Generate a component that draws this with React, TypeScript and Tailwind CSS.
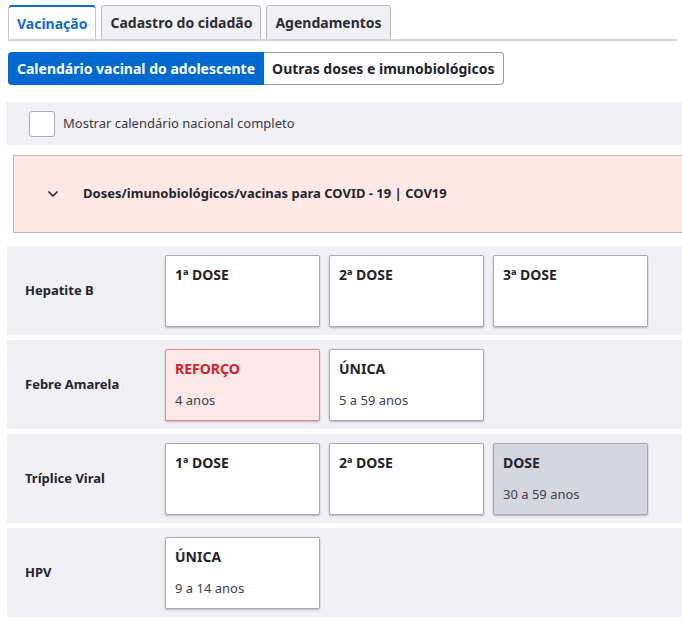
import { ChevronDown } from "lucide-react";

type Dose = { title: string; age?: string; variant?: "normal" | "alert" | "muted" };

type Vaccine = { name: string; doses: Dose[] };

const VACCINES: Vaccine[] = [
  { name: "Hepatite B", doses: [{ title: "1ª DOSE" }, { title: "2ª DOSE" }, { title: "3ª DOSE" }] },
  {
    name: "Febre Amarela",
    doses: [
      { title: "REFORÇO", age: "4 anos", variant: "alert" },
      { title: "ÚNICA", age: "5 a 59 anos" },
    ],
  },
  {
    name: "Tríplice Viral",
    doses: [{ title: "1ª DOSE" }, { title: "2ª DOSE" }, { title: "DOSE", age: "30 a 59 anos", variant: "muted" }],
  },
  { name: "HPV", doses: [{ title: "ÚNICA", age: "9 a 14 anos" }] },
];

const TABS = ["Vacinação", "Cadastro do cidadão", "Agendamentos"];

function DoseCard({ dose }: { dose: Dose }) {
  const variant = dose.variant ?? "normal";
  const box =
    variant === "alert"
      ? "bg-[#fde8e8] border-[#e88a8f]"
      : variant === "muted"
      ? "bg-[#d6d6e0] border-[#a8a8b6]"
      : "bg-white border-[#a8a8b6]";
  return (
    <div className={`w-[155px] h-[72px] rounded-[2px] border shadow-[0_1px_2px_rgba(0,0,0,0.25)] px-[9px] pt-[10px] ${box}`}>
      <p className={`text-[14px] font-bold leading-[18px] ${variant === "alert" ? "text-[#d01e2c]" : "text-[#24242c]"}`}>
        {dose.title}
      </p>
      {dose.age && <p className="text-[13px] leading-[18px] mt-[13px] text-[#40404a]">{dose.age}</p>}
    </div>
  );
}

export default function App() {
  return (
    <div className="w-[682px] h-[621px] bg-white overflow-hidden" style={{ fontFamily: '"Noto Sans", "Liberation Sans", sans-serif' }}>
      {/* Tabs */}
      <div className="pt-[5px] pl-[8px] pr-[5px]">
        <div className="flex gap-[5px] border-b-2 border-[#d4d4de]">
          {TABS.map((t, i) => (
            <div
              key={t}
              className={`h-[34px] px-[8px] flex items-center text-[14px] font-bold rounded-t-[4px] border border-b-0 ${
                i === 0
                  ? "bg-white text-[#0f6cc9] border-[#c4c4ce] border-t-2 border-t-[#0f6cc9]"
                  : "bg-[#f0f0f5] text-[#2c2c34] border-[#b8b8c4]"
              }`}
            >
              {t}
            </div>
          ))}
        </div>
      </div>

      {/* Segmented */}
      <div className="flex pl-[8px] mt-[11px]">
        <div className="h-[33px] px-[9px] flex items-center bg-[#0069d0] text-white text-[14px] font-bold rounded-l-[4px]">
          Calendário vacinal do adolescente
        </div>
        <div className="h-[33px] px-[8px] flex items-center bg-white text-[#24242c] text-[14px] font-bold rounded-r-[4px] border border-l-0 border-[#9a9aa6]">
          Outras doses e imunobiológicos
        </div>
      </div>

      {/* Checkbox */}
      <div className="ml-[6px] mt-[17px] h-[43px] bg-[#f0f0f5] flex items-center pl-[23px] gap-[8px]">
        <div className="w-[26px] h-[26px] bg-white border border-[#a8a8b6] rounded-[3px]" />
        <span className="text-[13px] text-[#3a3a44]">Mostrar calendário nacional completo</span>
      </div>

      {/* COVID */}
      <div className="ml-[13px] mt-[10px] h-[78px] bg-[#ffe9e7] border border-r-0 border-[#b4b4c0] flex items-center pl-[31px] gap-[22px]">
        <ChevronDown size={16} strokeWidth={2.5} className="text-[#24242c]" />
        <span className="text-[13px] font-bold text-[#24242c]">Doses/imunobiológicos/vacinas para COVID - 19 | COV19</span>
      </div>

      {/* Rows */}
      <div className="mt-[13px] ml-[7px] flex flex-col gap-[5px]">
        {VACCINES.map((v) => (
          <div key={v.name} className="h-[89px] bg-[#f0f0f5] flex items-center">
            <div className="w-[158px] pl-[18px] text-[13px] font-bold text-[#24242c]">{v.name}</div>
            <div className="flex gap-[9px]">
              {v.doses.map((d) => (
                <DoseCard key={d.title} dose={d} />
              ))}
            </div>
          </div>
        ))}
      </div>
    </div>
  );
}
